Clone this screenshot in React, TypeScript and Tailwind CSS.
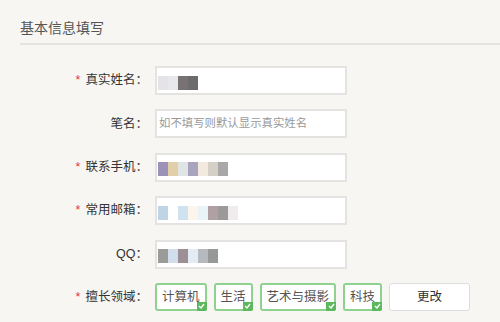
import React from "react";

const font = { fontFamily: '"Liberation Sans", "Noto Sans CJK SC", sans-serif' };

interface Row {
  label: string;
  required?: boolean;
  placeholder?: string;
  blur?: string[];
}

const rows: Row[] = [
  { label: "真实姓名", required: true, blur: ["#dcd9dc", "#dfe0e4", "#4a4446", "#3d3a3c"] },
  { label: "笔名", placeholder: "如不填写则默认显示真实姓名" },
  { label: "联系手机", required: true, blur: ["#7b6ea0", "#d6bf8c", "#d6dbdb", "#8b86a8", "#ede2d4", "#c8bfb6", "#8c8a8a"] },
  { label: "常用邮箱", required: true, blur: ["#a9c7dc", "#ffffff", "#c0d8ea", "#fbf1e6", "#e2eff5", "#978084", "#7a7777", "#ebe6e8"] },
  { label: "QQ", blur: ["#7a7a78", "#c1d4e6", "#7c6a72", "#d9e6f0", "#9ea3a8", "#747576"] },
];

const tags = ["计算机", "生活", "艺术与摄影", "科技"];

function Check() {
  return (
    <span className="absolute -bottom-[2px] -right-[2px] w-[10px] h-[9px] bg-[#5cb85c] rounded-br-[2px] flex items-center justify-center">
      <svg width="7" height="6" viewBox="0 0 7 6">
        <path d="M1 3 L3 5 L6 1" stroke="white" strokeWidth="1.4" fill="none" />
      </svg>
    </span>
  );
}

export default function App() {
  return (
    <div className="w-[500px] h-[322px] bg-[#f7f6f2] overflow-hidden" style={font}>
      <div className="pl-5 pt-[19px]">
        <h2 className="text-[14px] text-[#555] leading-[18px]">基本信息填写</h2>
        <div className="mt-[6px] h-[2px] bg-[#e5e3e0]" />
      </div>

      <div className="mt-[21px] flex flex-col gap-[14.4px]">
        {rows.map((r) => (
          <div key={r.label} className="flex items-center">
            <div className="w-[148px] text-right text-[12.5px] text-[#333]">
              {r.required && <span className="text-[#e4393c] mr-[5px]">*</span>}
              {r.label}：
            </div>
            <div className="ml-[7px] w-[192px] h-[29px] border-2 border-[#e4e3e1] bg-white flex items-center pl-[1px]">
              {r.placeholder ? (
                <span className="text-[11.4px] text-[#999] pl-[1px]">{r.placeholder}</span>
              ) : (
                <div className="flex mt-[4px]">
                  {r.blur?.map((c, i) => (
                    <span key={i} className="w-[10px] h-[14px]" style={{ backgroundColor: c, opacity: 0.75 }} />
                  ))}
                </div>
              )}
            </div>
          </div>
        ))}

        <div className="flex items-center">
          <div className="w-[148px] text-right text-[12.5px] text-[#333]">
            <span className="text-[#e4393c] mr-[5px]">*</span>擅长领域：
          </div>
          <div className="ml-[7px] flex gap-[7px]">
            {tags.map((t) => (
              <div
                key={t}
                className="relative h-[28px] px-[5px] border-2 border-[#8fd18f] rounded-[3px] bg-white flex items-center text-[12.5px] text-[#555]"
              >
                {t}
                <Check />
              </div>
            ))}
            <div className="h-[28px] w-[81px] border border-[#ddd] rounded-[3px] bg-white flex items-center justify-center text-[12.5px] text-[#333]">
              更改
            </div>
          </div>
        </div>
      </div>
    </div>
  );
}
